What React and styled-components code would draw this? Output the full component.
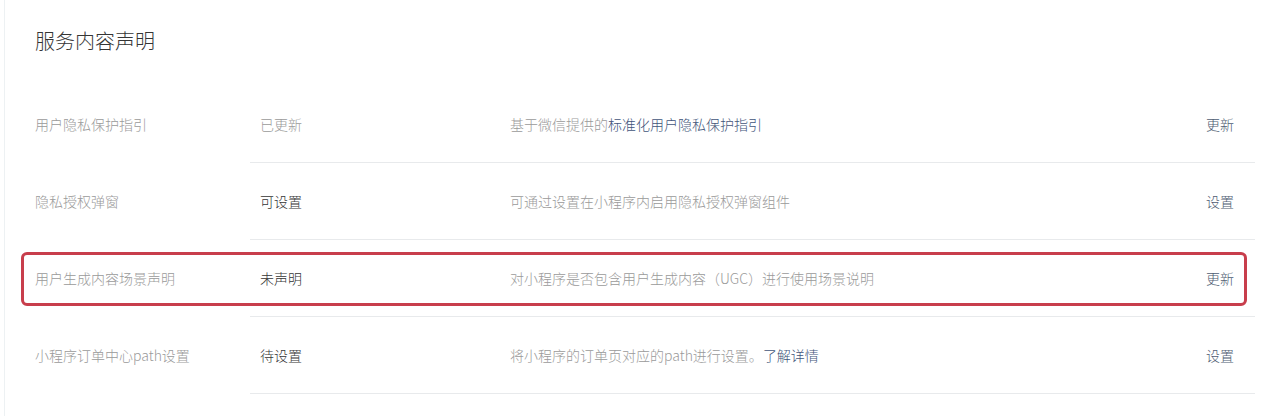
import React from 'react';
import styled, { createGlobalStyle } from 'styled-components';

const GlobalStyles = createGlobalStyle`
    html, body {
        margin: 0;
        background: #ffffff;
        font-family: "Noto Sans CJK SC", "Noto Sans", "Liberation Sans", sans-serif;
        font-weight: 300;
    }
`;

const Frame = styled.div`
    padding-left: 4px;
    min-height: 416px;
    box-sizing: border-box;
`;

const Panel = styled.section`
    border-left: 1px solid #edf1f3;
    padding: 30px 15px 0 30px;
    min-height: 386px;
`;

const Title = styled.h2`
    margin: 0 0 34px;
    font-size: 20px;
    line-height: 22px;
    font-weight: 300;
    color: #353535;
`;

const Row = styled.div`
    position: relative;
    display: flex;
    height: 77px;
    font-size: 14px;
`;

const Label = styled.div`
    width: 215px;
    flex: none;
    display: flex;
    align-items: center;
    color: #9a9a9a;
    padding-bottom: 1px;
`;

const Body = styled.div`
    flex: 1;
    display: flex;
    align-items: center;
    padding: 0 21px 0 10px;
    border-bottom: 1px solid #e8eaec;
`;

const Status = styled.div`
    width: 250px;
    flex: none;
    color: ${p => (p.$muted ? '#9a9a9a' : '#353535')};
`;

const Desc = styled.div`
    flex: 1;
    color: #9a9a9a;
`;

const Link = styled.a`
    color: #42557a;
    text-decoration: none;
`;

const Action = styled.a`
    color: #4e5c72;
    text-decoration: none;
`;

const Highlight = styled.div`
    position: absolute;
    top: 12px;
    bottom: 11px;
    left: -14px;
    right: 8px;
    border: 3px solid #c83e4c;
    border-radius: 6px;
    pointer-events: none;
`;

const items = [
    {
        label: '用户隐私保护指引',
        status: '已更新',
        muted: true,
        desc: ['基于微信提供的', '标准化用户隐私保护指引'],
        action: '更新',
    },
    {
        label: '隐私授权弹窗',
        status: '可设置',
        desc: ['可通过设置在小程序内启用隐私授权弹窗组件'],
        action: '设置',
    },
    {
        label: '用户生成内容场景声明',
        status: '未声明',
        desc: ['对小程序是否包含用户生成内容（UGC）进行使用场景说明'],
        action: '更新',
        marked: true,
    },
    {
        label: '小程序订单中心path设置',
        status: '待设置',
        desc: ['将小程序的订单页对应的path进行设置。', '了解详情'],
        action: '设置',
    },
];

const App = () => {
    return (
        <>
            <GlobalStyles />
            <Frame>
                <Panel>
                    <Title>服务内容声明</Title>
                    {items.map(item => (
                        <Row key={item.label}>
                            <Label>{item.label}</Label>
                            <Body>
                                <Status $muted={item.muted}>{item.status}</Status>
                                <Desc>
                                    {item.desc[0]}
                                    {item.desc[1] && <Link href="#">{item.desc[1]}</Link>}
                                </Desc>
                                <Action href="#">{item.action}</Action>
                            </Body>
                            {item.marked && <Highlight />}
                        </Row>
                    ))}
                </Panel>
            </Frame>
        </>
    );
};

export default App;
